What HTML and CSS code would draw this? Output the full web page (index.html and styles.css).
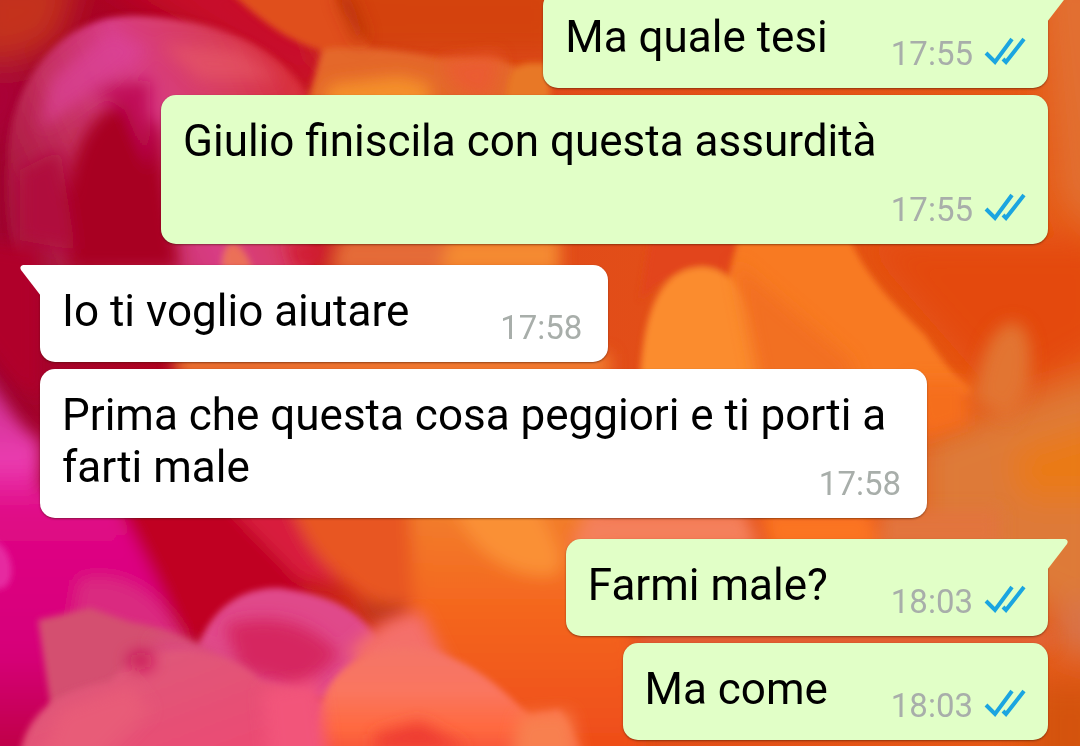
FILE: index.html
```html
<!DOCTYPE html>
<html lang="it">
<head>
<meta charset="utf-8">
<meta name="viewport" content="width=device-width, initial-scale=1">
<title>Chat</title>
<link rel="stylesheet" href="styles.css">
</head>
<body>
<svg class="wallpaper" viewBox="0 0 1080 746" preserveAspectRatio="xMidYMid slice" aria-hidden="true">
  <defs>
    <linearGradient id="base" x1="0" y1="0" x2="1" y2="0">
      <stop offset="0" stop-color="#a00430"/>
      <stop offset=".22" stop-color="#b40016"/>
      <stop offset=".4" stop-color="#e0481a"/>
      <stop offset="1" stop-color="#e65a14"/>
    </linearGradient>
    <linearGradient id="ring" gradientUnits="userSpaceOnUse" x1="10" y1="200" x2="310" y2="60">
      <stop offset="0" stop-color="#a8143c"/>
      <stop offset=".25" stop-color="#c4305e"/>
      <stop offset=".5" stop-color="#d83c84"/>
      <stop offset=".75" stop-color="#d83c5c"/>
      <stop offset="1" stop-color="#d82a30"/>
    </linearGradient>
    <linearGradient id="magenta" gradientUnits="userSpaceOnUse" x1="0" y1="380" x2="0" y2="746">
      <stop offset="0" stop-color="#c8308a"/>
      <stop offset=".22" stop-color="#ea3cb0"/>
      <stop offset=".36" stop-color="#e00886"/>
      <stop offset=".75" stop-color="#d60078"/>
      <stop offset="1" stop-color="#c00048"/>
    </linearGradient>
    <linearGradient id="rose" x1="0" y1="0" x2="1" y2="1">
      <stop offset="0" stop-color="#da5c7c"/>
      <stop offset="1" stop-color="#f04670"/>
    </linearGradient>
    <linearGradient id="coral" x1="0" y1="0" x2="0" y2="1">
      <stop offset="0" stop-color="#f47468"/>
      <stop offset=".35" stop-color="#fa7660"/>
      <stop offset=".65" stop-color="#ff6a40"/>
      <stop offset="1" stop-color="#f24634"/>
    </linearGradient>
    <linearGradient id="amber" x1="0" y1="0" x2="0" y2="1">
      <stop offset="0" stop-color="#f2802e"/>
      <stop offset=".4" stop-color="#f4661e"/>
      <stop offset="1" stop-color="#ee4818"/>
    </linearGradient>
    <filter id="soft" x="-20%" y="-20%" width="140%" height="140%"><feGaussianBlur stdDeviation="3"/></filter>
    <filter id="mist" x="-40%" y="-40%" width="180%" height="180%"><feGaussianBlur stdDeviation="8"/></filter>
    <filter id="haze" x="-40%" y="-40%" width="180%" height="180%"><feGaussianBlur stdDeviation="16"/></filter>
  </defs>
  <rect width="1080" height="746" fill="url(#base)"/>

  <g filter="url(#haze)">
    <path fill="#c4301a" d="M-30-30H80L60 40 20 60-30 60Z"/>
    <path fill="#ac0038" d="M-30 70 30 70 10 130-30 150Z"/>
    <path fill="#c8102c" d="M90-30H260L340 60 310 100 200 30Z"/>
    <path fill="#d4420e" d="M300-30H570V60L440 60 330 60Z"/>
    <path fill="#e27030" d="M1040-30H1110V240L1060 200Z"/>
    <path fill="#e4480e" d="M860 240H1110V340L1000 400Z"/>
    <path fill="#de7a38" d="M920 440 1110 370V640L1040 600 920 550Z"/>
    <path fill="#d8744c" d="M1055 600H1110V660L1055 650Z"/>
    <path fill="#d4520c" d="M1030 680H1110V780H1030Z"/>
    <path fill="#ea7a14" d="M1010 450 1110 420V500L1020 500Z"/>
  </g>

  <g filter="url(#soft)">
    <path fill="#e0501c" d="M228-10C260 20 290 45 330 52L372 50 330-10Z"/>
    <path fill="url(#ring)" d="M8 150C14 70 70 16 130 16 200 16 280 40 310 100V270H20C6 230 4 190 8 150Z"/>
    <path fill="#e4682a" d="M322 50C350 44 400 50 440 58L500 60 550 80V100H308Z"/>
    <path fill="#f07c50" d="M222 268C222 250 228 243 234 243 244 248 250 262 252 270Z" opacity=".8"/>
    <path fill="#e87828" d="M506 100C508 66 516 60 550 64V100Z"/>
    <path fill="#e2441a" d="M650 240H740L733 282C700 262 670 270 640 300Z"/>
    <path fill="#f87a20" d="M738 240H850C868 280 900 310 925 335 948 370 960 380 972 392L940 400H700Z"/>
    <path fill="#fb8c2e" d="M640 380C644 300 665 267 704 267 740 270 756 310 770 380Z"/>
  </g>

  <g filter="url(#mist)">
    <path fill="#f4902c" d="M330 84 400 76 430 84 430 110H320Z"/>
    <path fill="#ea5c30" d="M440 62 500 55 490 100 460 90Z"/>
    <path fill="#b8300c" d="M336-5 350-5 366 36 358 44Z"/>
    <path fill="#e85a68" opacity=".6" d="M160 44 240 50 280 80 200 80Z"/>
    <path fill="#dc4498" opacity=".7" d="M50 80 110 30 150 50 90 95 40 130Z"/>
    <path fill="#f27024" d="M735 262 850 360 860 390H760Z"/>
    <path fill="#f56e1c" d="M910 380H968V425L920 440Z"/>
    <path fill="#a80424" d="M95 120C120 90 150 110 160 130L180 270H70C60 200 70 150 95 120Z"/>
    <path fill="#c01058" d="M90 88 150 80V170L125 110Z"/>
    <path fill="#b0103c" d="M20 170 60 150 75 250 20 240Z"/>
    <path fill="#e27430" d="M975 400C980 340 1000 322 1016 322 1030 330 1034 350 1028 390L1010 420Z"/>
    <path fill="#b0002c" d="M-20 240 40 250V400L10 380-20 340Z"/>
    <path fill="#d01c34" d="M285 240H335L320 270H294Z"/>
    <path fill="#e46c38" d="M340 236H460V274H330Z"/>
    <path fill="#f48a30" d="M450 236H560V274H440Z"/>
    <path fill="#f28030" d="M175 376V354H610V376Z"/>
  </g>

  <g filter="url(#mist)">
    <path fill="#c00020" d="M90 500H280L310 620 180 640Z"/>
    <path fill="url(#magenta)" d="M-30 360C0 380 10 425 40 440V490L115 500C135 540 165 590 180 640L80 780H-30Z"/>
    <path fill="#d81c3c" d="M222 500H290L340 585 300 580Z"/>
    <path fill="#e85620" d="M290 500H430V620L360 595C330 570 305 550 290 500Z"/>
    <path fill="url(#amber)" d="M410 500H600C590 560 650 600 640 770H500L415 650Z"/>
    <path fill="#fa9036" d="M450 495H530C555 540 570 560 555 575 520 580 470 560 450 495Z"/>
    <path fill="#c0381e" d="M355 600 410 605 400 620 372 625Z"/>
    <path fill="#f4805c" d="M590 510H745L760 550H570Z"/>
    <path fill="#fb7424" d="M760 510H870L880 550H770Z"/>
    <path fill="#e2743c" d="M880 510H1000V550H880Z"/>
    <path fill="#e06848" d="M640 634H1050V646H640Z"/>
    <path fill="#da2c80" d="M80 580C130 570 160 600 185 640L140 665 70 640Z"/>
  </g>

  <g filter="url(#soft)">
    <path fill="#e0488a" d="M195 655C210 605 245 587 280 588 330 595 360 610 378 640L330 700H230Z"/>
    <path fill="#d45070" d="M38 620 90 608 130 622C180 630 220 650 240 690L200 770H60Z"/>
  </g>
  <g filter="url(#mist)">
    <path fill="#f4706a" d="M350 650C380 620 400 612 422 612L450 670H360Z"/>
    <path fill="#d62660" d="M225 625C270 612 310 620 340 655L300 690 240 670Z"/>
    <path fill="#dc4a80" d="M150 640C190 635 240 655 270 700L190 700Z"/>
  </g>
  <g filter="url(#soft)">
    <path fill="url(#rose)" d="M18 770C22 710 60 690 110 682 140 640 220 640 260 680 290 690 310 690 340 710V770Z"/>
    <path fill="url(#coral)" d="M316 770C304 700 340 640 420 648 480 660 510 700 530 715L560 710 590 770Z"/>
    <path fill="#e62aa0" d="M-8 540C12 545 18 580 4 588L-8 590Z"/>
  </g>
  <g filter="url(#mist)">
    <path fill="#f2547a" d="M262 690 318 680 330 770H270Z"/>
    <ellipse fill="#c80c54" cx="141" cy="661" rx="13" ry="9"/>
    <path fill="#e85c78" d="M60 710 130 685 150 710 100 760H40Z"/>
    <path fill="#ee3a30" d="M375 735 420 722 470 750H375Z"/>
    <path fill="#f88050" d="M520 715 570 712 580 760H510Z"/>
  </g>
</svg>

<main class="chat">
  <article class="bubble sent first">
    <svg class="tail" viewBox="0 0 21 32" aria-hidden="true"><path d="M0 0H18Q22 1 20 5L0 31Z"/></svg>
    <p class="text">Ma quale tesi</p>
    <div class="meta"><time>17:55</time><svg class="ticks" viewBox="0 0 42 30" role="img" aria-label="Letto"><path d="M2 17 11 26 28 3M19 23 22 26 40 3"/></svg></div>
  </article>
  <article class="bubble sent wide">
    <p class="text">Giulio finiscila con questa assurdità</p>
    <div class="meta"><time>17:55</time><svg class="ticks" viewBox="0 0 42 30" role="img" aria-label="Letto"><path d="M2 17 11 26 28 3M19 23 22 26 40 3"/></svg></div>
  </article>
  <article class="bubble received first">
    <svg class="tail" viewBox="0 0 21 32" aria-hidden="true"><path d="M21 0H3Q-1 1 1 5L21 31Z"/></svg>
    <p class="text">Io ti voglio aiutare</p>
    <div class="meta"><time>17:58</time></div>
  </article>
  <article class="bubble received wide">
    <p class="text">Prima che questa cosa peggiori e ti porti a farti male</p>
    <div class="meta"><time>17:58</time></div>
  </article>
  <article class="bubble sent first">
    <svg class="tail" viewBox="0 0 21 32" aria-hidden="true"><path d="M0 0H18Q22 1 20 5L0 31Z"/></svg>
    <p class="text">Farmi male?</p>
    <div class="meta"><time>18:03</time><svg class="ticks" viewBox="0 0 42 30" role="img" aria-label="Letto"><path d="M2 17 11 26 28 3M19 23 22 26 40 3"/></svg></div>
  </article>
  <article class="bubble sent">
    <p class="text">Ma come</p>
    <div class="meta"><time>18:03</time><svg class="ticks" viewBox="0 0 42 30" role="img" aria-label="Letto"><path d="M2 17 11 26 28 3M19 23 22 26 40 3"/></svg></div>
  </article>
</main>
</body>
</html>
```

FILE: styles.css
```css
* { box-sizing: border-box; }

body {
  margin: 0;
  overflow: hidden;
  font-family: Roboto, "Liberation Sans", sans-serif;
  color: #000;
}

.wallpaper {
  position: fixed;
  inset: 0;
  width: 100%;
  height: 100%;
  z-index: -1;
}

.chat {
  display: flex;
  flex-direction: column;
  justify-content: flex-end;
  gap: 7px;
  height: 100vh;
  padding: 0 32px 6px 40px;
}

.bubble {
  position: relative;
  display: flex;
  flex-shrink: 0;
  align-items: flex-end;
  gap: 63px;
  padding: 20px 22px 14px;
  border-radius: 15px;
  box-shadow: 0 1px 2px rgba(60, 20, 0, .5);
}

.sent {
  align-self: flex-end;
  background: #e1ffc7;
}

.received {
  align-self: flex-start;
  gap: 91px;
  padding-right: 26px;
  background: #fff;
}

.bubble.first:not(:first-child) { margin-top: 14px; }
.sent.first { border-top-right-radius: 0; }
.received.first { border-top-left-radius: 0; }

.wide {
  display: grid;
  width: 88%;
}

.wide .text,
.wide .meta { grid-area: 1 / 1; }
.wide .text { min-height: 104px; }
.wide .meta { place-self: end; }

.text {
  margin: 0 0 11px;
  font-size: 44px;
  line-height: 52px;
}

.meta {
  display: flex;
  align-items: center;
  gap: 11px;
  color: #a8aeaa;
  font-size: 33px;
  line-height: 40px;
}

.ticks {
  width: 42px;
  height: 30px;
  margin-bottom: 6px;
  fill: none;
  stroke: #1ba5e0;
  stroke-width: 4;
}

.tail {
  position: absolute;
  top: 0;
  width: 21px;
  height: 32px;
}

.sent .tail {
  left: 100%;
  margin-left: -1px;
  fill: #e1ffc7;
}

.received .tail {
  right: 100%;
  margin-right: -1px;
  fill: #fff;
}
```
